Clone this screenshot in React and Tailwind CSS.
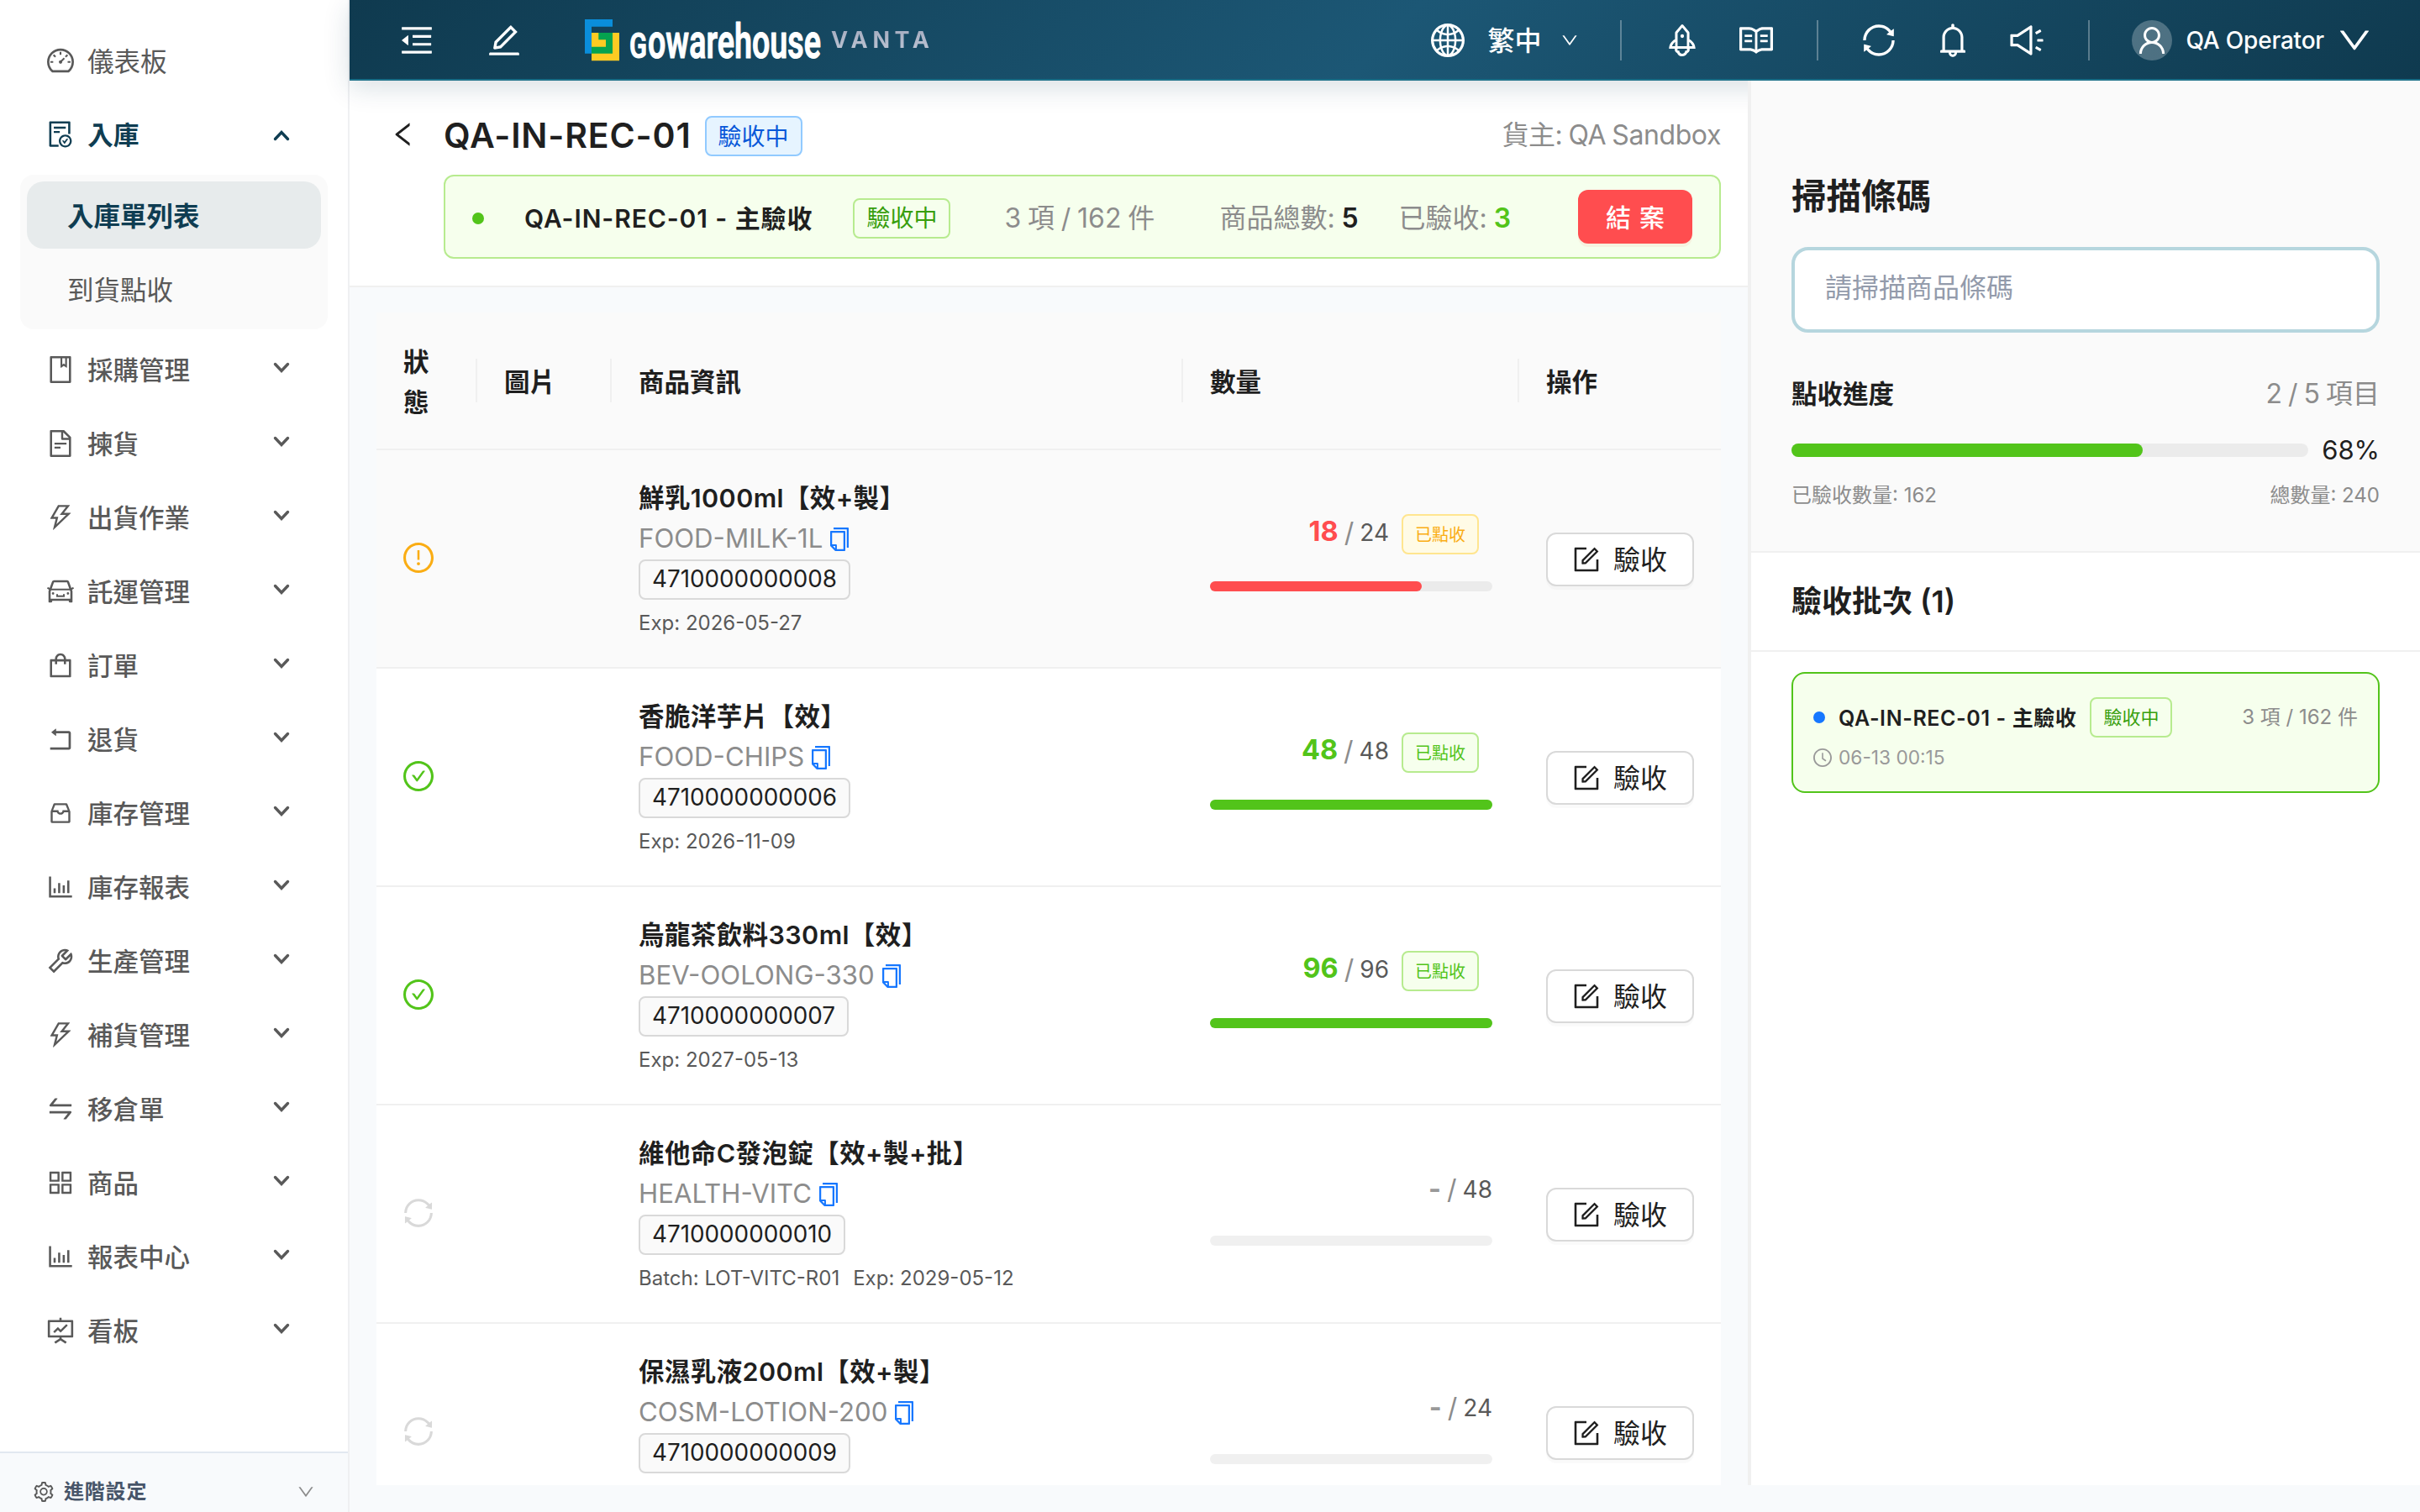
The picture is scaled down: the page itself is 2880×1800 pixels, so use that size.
import React from 'react';
import {
  AiOutlineDashboard,
  AiOutlineFileDone,
  AiOutlineBook,
  AiOutlineFileText,
  AiOutlineThunderbolt,
  AiOutlineCar,
  AiOutlineShopping,
  AiOutlineRollback,
  AiOutlineInbox,
  AiOutlineBarChart,
  AiOutlineTool,
  AiOutlineSwap,
  AiOutlineAppstore,
  AiOutlineFundProjectionScreen,
  AiOutlineSetting,
  AiOutlineDown,
  AiOutlineLeft,
  AiOutlineMenuFold,
  AiOutlineEdit,
  AiOutlineGlobal,
  AiOutlineRocket,
  AiOutlineRead,
  AiOutlineSync,
  AiOutlineBell,
  AiOutlineSound,
  AiOutlineUser,
  AiOutlineCopy,
  AiOutlineForm,
  AiOutlineExclamationCircle,
  AiOutlineCheckCircle,
  AiOutlineClockCircle,
} from 'react-icons/ai';

const menuItems = [
  { label: '採購管理', icon: AiOutlineBook },
  { label: '揀貨', icon: AiOutlineFileText },
  { label: '出貨作業', icon: AiOutlineThunderbolt },
  { label: '託運管理', icon: AiOutlineCar },
  { label: '訂單', icon: AiOutlineShopping },
  { label: '退貨', icon: AiOutlineRollback },
  { label: '庫存管理', icon: AiOutlineInbox, viewBox: '0 0 1024 1024' },
  { label: '庫存報表', icon: AiOutlineBarChart },
  { label: '生產管理', icon: AiOutlineTool },
  { label: '補貨管理', icon: AiOutlineThunderbolt },
  { label: '移倉單', icon: AiOutlineSwap },
  { label: '商品', icon: AiOutlineAppstore },
  { label: '報表中心', icon: AiOutlineBarChart },
  { label: '看板', icon: AiOutlineFundProjectionScreen },
];

const products = [
  { name: '鮮乳1000ml【效+製】', sku: 'FOOD-MILK-1L', barcode: '4710000000008', exp: '2026-05-27', received: 18, total: 24, status: 'partial' },
  { name: '香脆洋芋片【效】', sku: 'FOOD-CHIPS', barcode: '4710000000006', exp: '2026-11-09', received: 48, total: 48, status: 'done' },
  { name: '烏龍茶飲料330ml【效】', sku: 'BEV-OOLONG-330', barcode: '4710000000007', exp: '2027-05-13', received: 96, total: 96, status: 'done' },
  { name: '維他命C發泡錠【效+製+批】', sku: 'HEALTH-VITC', barcode: '4710000000010', batch: 'LOT-VITC-R01', exp: '2029-05-12', received: 0, total: 48, status: 'pending' },
  { name: '保濕乳液200ml【效+製】', sku: 'COSM-LOTION-200', barcode: '4710000000009', received: 0, total: 24, status: 'pending' },
];

// Ant icons are drawn on a 896 grid with a 64 offset
const Icon = ({ as: Glyph, size, viewBox = '64 64 896 896', className = '' }) => (
  <Glyph size={size} viewBox={viewBox} className={`shrink-0 ${className}`} />
);

const Chevron = ({ open }) => (
  <svg width="20" height="14" viewBox="0 0 20 14" fill="none" stroke="currentColor" strokeWidth="3.4" strokeLinecap="round" className="shrink-0">
    {open ? <path d="M2.5 11.5 10 3.5l7.5 8" /> : <path d="M2.5 2.5 10 10.5l7.5-8" />}
  </svg>
);

const Sidebar = () => (
  <aside className="w-[416px] shrink-0 flex flex-col bg-white border-r-2 border-[#eff0f2]">
    <nav className="flex-1 pt-8 text-[#595959]">
      <div className="h-20 pl-14 flex items-center gap-4 text-[31.5px]">
        <Icon as={AiOutlineDashboard} size={32} />
        <span className="pt-[3px]">儀表板</span>
      </div>
      <div className="mt-2 h-20 pl-14 pr-[69px] flex items-center gap-4 text-[30.8px] font-semibold text-[#0f3d52]">
        <Icon as={AiOutlineFileDone} size={32} />
        <span className="flex-1 pt-[3px]">入庫</span>
        <span className="pt-0.5 flex">
          <Chevron open />
        </span>
      </div>
      <div className="my-2 mx-6 p-2 rounded-2xl bg-[#fafafa] text-[31.5px]">
        <div className="h-20 pl-12 pt-[3px] flex items-center rounded-[20px] bg-[#e7ebec] font-semibold text-[#0f3d52]">入庫單列表</div>
        <div className="mt-2 h-20 pl-12 pt-[3px] flex items-center">到貨點收</div>
      </div>
      <div className="flex flex-col gap-2">
        {menuItems.map((item) => (
          <div key={item.label} className="h-20 pl-14 pr-[69px] flex items-center gap-4 text-[30.5px] font-medium">
            <Icon as={item.icon} size={32} viewBox={item.viewBox} />
            <span className="flex-1 pt-0.5">{item.label}</span>
            <span className="-mt-1 flex">
              <Chevron />
            </span>
          </div>
        ))}
      </div>
    </nav>
    <div className="h-[72px] pt-[22px] pl-10 pr-10 flex items-center gap-3 bg-[#f8fafc] border-t-2 border-[#e2e8f0]">
      <Icon as={AiOutlineSetting} size={24} className="text-[#595959]" />
      <span className="flex-1 text-2xl font-bold tracking-[0.8px] text-[#475569]">進階設定</span>
      <Icon as={AiOutlineDown} size={20} className="text-[#8c8c8c]" />
    </div>
  </aside>
);

const Divider = () => <span className="w-0.5 h-12 bg-white/30" />;

const Logo = () => (
  <svg width="284" height="56" viewBox="0 0 284 56" fill="#fff" className="shrink-0 font-[Roboto,sans-serif] font-semibold">
    <path d="M0 3h33v8.7H8v32H0z" fill="#0a8edb" />
    <path d="M8 19h33v33.3H8z" fill="#fdcb23" />
    <path d="M16.3 19H33v24.7H8v-8h17v-8.4h-8.7z" fill="#05a34f" />
    <g stroke="#fff" strokeWidth="1" strokeLinejoin="round">
      <text x="53" y="48.5" textLength="21" lengthAdjust="spacingAndGlyphs" className="text-[43px]">
        G
      </text>
      <text x="75" y="48.5" textLength="206" lengthAdjust="spacingAndGlyphs" className="text-[57px]">
        owarehouse
      </text>
    </g>
  </svg>
);

const Header = () => (
  <header className="relative z-10 h-24 pt-0.5 shrink-0 flex items-center border-b-2 border-[#1a6e87] bg-[linear-gradient(135deg,#0f3a4f_0%,#1c5775_50%,#0f3a4f_100%)] shadow-[0_8px_32px_rgba(13,59,79,0.16)] text-white">
    <div className="flex items-center pl-[60px]">
      <Icon as={AiOutlineMenuFold} size={40} />
      <Icon as={AiOutlineEdit} size={40} className="ml-16 mr-[76px]" />
      <Logo />
      <span className="ml-[9px] text-[27px] font-bold tracking-[5.6px] bg-gradient-to-b from-[#a0a6ba] to-[#c3ccda] bg-clip-text text-transparent">VANTA</span>
    </div>
    <div className="ml-auto flex items-center pr-[58px]">
      <Icon as={AiOutlineGlobal} size={40} />
      <span className="ml-7 pt-0.5 text-[32px] font-medium">繁中</span>
      <Icon as={AiOutlineDown} size={20} className="ml-[23px] mr-[50px]" />
      <Divider />
      <Icon as={AiOutlineRocket} size={40} className="ml-[52px] mr-12" />
      <Icon as={AiOutlineRead} size={40} className="mr-[52px]" />
      <Divider />
      <Icon as={AiOutlineSync} size={40} className="ml-[52px] mr-12" />
      <Icon as={AiOutlineBell} size={40} className="mr-12" />
      <Icon as={AiOutlineSound} size={40} className="mr-[53px]" />
      <Divider />
      <span className="ml-[50px] w-12 h-12 rounded-full bg-white/25 flex items-center justify-center">
        <Icon as={AiOutlineUser} size={36} />
      </span>
      <span className="ml-[17px] mr-4 text-[28px] font-medium tracking-[-0.2px]">QA Operator</span>
      <Icon as={AiOutlineDown} size={40} />
    </div>
  </header>
);

const OrderHeader = () => (
  <div className="h-[246px] shrink-0 bg-white border-b-2 border-[#f0f0f0] pl-12 pr-8 text-[#1f1f1f]">
    <div className="h-28 pt-5 flex items-center">
      <Icon as={AiOutlineLeft} size={32} className="mb-1" />
      <h1 className="ml-8 mb-0.5 text-[41px] font-semibold leading-none tracking-[0.85px]">QA-IN-REC-01</h1>
      <span className="ml-4 h-12 px-3.5 pt-0.5 flex items-center rounded-lg border-2 border-[#91caff] bg-[#e6f4ff] text-[28px] text-[#0958d9]">驗收中</span>
      <span className="ml-auto mb-0.5 text-[32px] tracking-[-0.4px] [word-spacing:-1.5px] text-[#8c8c8c]">貨主: QA Sandbox</span>
    </div>
    <div className="ml-16 h-[100px] pt-1 pl-8 pr-8 flex items-center rounded-xl border-2 border-[#b7eb8f] bg-[#f6ffed] text-[32px] text-[#8c8c8c] [word-spacing:-1.2px]">
      <span className="w-3.5 h-3.5 rounded-full bg-[#52c41a]" />
      <span className="ml-12 text-[30px] font-semibold tracking-[0.9px] [word-spacing:0px] text-[#1f1f1f]">QA-IN-REC-01 - 主驗收</span>
      <span className="ml-12 h-12 px-3.5 flex items-center rounded-lg border-2 border-[#b7eb8f] text-[28px] text-[#389e0d]">驗收中</span>
      <span className="ml-16">3 項 / 162 件</span>
      <span className="ml-auto">
        商品總數: <b className="font-semibold text-[#1f1f1f]">5</b>
      </span>
      <span className="ml-12">
        已驗收: <b className="font-semibold text-[#52c41a]">3</b>
      </span>
      <button className="ml-20 mb-1 w-[136px] h-16 pt-0.5 rounded-xl bg-[#ff4d4f] text-white text-[30px] font-medium [word-spacing:2px] shadow-[0_4px_0_rgba(255,38,5,0.06)]">結 案</button>
    </div>
  </div>
);

const StatusIcon = ({ status }) => {
  if (status === 'partial') return <Icon as={AiOutlineExclamationCircle} size={36} className="text-[#faad14]" />;
  if (status === 'done') return <Icon as={AiOutlineCheckCircle} size={36} className="text-[#52c41a]" />;
  return <Icon as={AiOutlineSync} size={36} className="text-[#d9d9d9]" />;
};

const quantityStyles = {
  partial: { text: 'text-[#ff4d4f]', bar: 'bg-[#ff4d4f]', tag: 'border-[#ffe58f] bg-[#fffbe6] text-[#faad14]' },
  done: { text: 'text-[#52c41a]', bar: 'bg-[#52c41a]', tag: 'border-[#b7eb8f] bg-[#f6ffed] text-[#52c41a]' },
};

const Quantity = ({ received, total, status }) => {
  const style = quantityStyles[status];
  return (
    <div className="px-8 pb-[15px]">
      <div className="h-12 flex items-center justify-end text-[28px] text-[#595959]">
        <span className={`flex items-center ${style ? 'mb-1' : 'mb-0.5'}`}>
          {style ? (
            <span className={`text-[32.5px] font-bold ${style.text}`}>{received}</span>
          ) : (
            <span className="text-[32px] font-bold text-[#999]">-</span>
          )}
          <span className="ml-[7px] mr-[7px] text-[32px] text-[#8c8c8c]">/</span>
          {total}
        </span>
        {style && <span className={`ml-[15px] mr-4 h-12 px-3.5 pt-0.5 flex items-center rounded-lg border-2 text-xl ${style.tag}`}>已點收</span>}
      </div>
      <div className={`${style ? 'mt-8' : 'mt-[30px]'} h-3 rounded-full bg-black/6`}>
        {style && <div className={`h-3 rounded-full ${style.bar}`} style={{ width: `${(received / total) * 100}%` }} />}
      </div>
    </div>
  );
};

const ProductTable = () => (
  <div className="flex-1 min-h-0 overflow-hidden mt-[30px] mx-8">
    <div className="grid grid-cols-[120px_160px_680px_400px_240px] items-center h-[164px] bg-[#fafafa] border-b-2 border-[#f0f0f0] text-[30.5px] font-semibold text-[#1f1f1f]">
      <div className="pl-8 pr-14 pt-1 border-r-2 border-[#f0f0f0] h-[52px] flex items-center leading-[48px]">狀態</div>
      <div className="pl-8 pt-[3px] h-[52px] flex items-center border-r-2 border-[#f0f0f0]">圖片</div>
      <div className="pl-8 pt-[3px] h-[52px] flex items-center border-r-2 border-[#f0f0f0]">商品資訊</div>
      <div className="pl-8 pt-[3px] h-[52px] flex items-center border-r-2 border-[#f0f0f0]">數量</div>
      <div className="pl-8 pt-[3px]">操作</div>
    </div>
    {products.map((product, index) => (
      <div
        key={product.sku}
        className={`grid grid-cols-[120px_160px_680px_400px_240px] items-center h-[260px] border-b-2 border-[#f0f0f0] ${index === 0 ? 'bg-[#fafafa]' : 'bg-white'}`}
      >
        <div className="pl-8 pb-0.5">
          <StatusIcon status={product.status} />
        </div>
        <div />
        <div className="pl-8 pt-[5px]">
          <div className="h-12 flex items-center text-[30.5px] font-semibold tracking-[0.4px] text-[#1f1f1f]">{product.name}</div>
          <div className="h-12 pt-px flex items-center gap-1.5 text-[31.2px] text-[#8c8c8c]">
            {product.sku}
            <Icon as={AiOutlineCopy} size={28} className="text-[#1677ff]" />
          </div>
          <div className="h-12 mt-px w-fit px-3.5 flex items-center rounded-lg border-2 border-[#d9d9d9] bg-[#fafafa] text-[27.8px] text-[#1f1f1f]">{product.barcode}</div>
          <div className="h-12 mt-1 flex items-center gap-4 text-2xl text-[#595959]">
            {product.batch && <span>Batch: {product.batch}</span>}
            {product.exp && <span>Exp: {product.exp}</span>}
          </div>
        </div>
        <Quantity {...product} />
        <div className="pl-8 pt-0.5">
          <button className="w-44 h-16 flex items-center justify-center gap-4 rounded-xl border-2 border-[#d9d9d9] bg-white text-[32px] text-[#1f1f1f] shadow-[0_4px_0_rgba(0,0,0,0.02)]">
            <Icon as={AiOutlineForm} size={32} />
            <span className="pt-0.5">驗收</span>
          </button>
        </div>
      </div>
    ))}
  </div>
);

const ScanPanel = () => (
  <aside className="relative z-20 w-[800px] shrink-0 mb-8 bg-white border-l-4 border-[#f0f0f0] text-[#1f1f1f]">
    <div className="h-[562px] px-12 pt-[104px] bg-[#fafafa] border-b-2 border-[#f0f0f0]">
      <h2 className="h-[66px] pt-0.5 flex items-center text-[41.5px] font-semibold">掃描條碼</h2>
      <div className="mt-7 h-[102px] px-9 pb-1 flex items-center rounded-[20px] border-4 border-[#b6d6de] bg-white text-[32px] text-[#939bab]">請掃描商品條碼</div>
      <div className="mt-12 h-12 pt-0.5 flex items-center justify-between">
        <span className="text-[30.5px] font-semibold">點收進度</span>
        <span className="text-[32px] [word-spacing:-2px] text-[#8c8c8c]">2 / 5 項目</span>
      </div>
      <div className="mt-5 h-12 flex items-center gap-4 text-[31px]">
        <div className="flex-1 h-4 rounded-full bg-black/6">
          <div className="h-4 rounded-full bg-[#52c41a]" style={{ width: '68%' }} />
        </div>
        <span>68%</span>
      </div>
      <div className="mt-2.5 h-10 flex items-center justify-between text-2xl text-[#8c8c8c]">
        <span>已驗收數量: 162</span>
        <span>總數量: 240</span>
      </div>
    </div>
    <h2 className="h-[118px] px-12 flex items-center border-b-2 border-[#f0f0f0] text-4xl font-semibold">驗收批次 (1)</h2>
    <div className="mt-6 mx-12 h-36 px-6 pt-7 rounded-2xl border-2 border-[#52c41a] bg-[#f6ffed]">
      <div className="h-12 flex items-center">
        <span className="w-3.5 h-3.5 rounded-full bg-[#1677ff]" />
        <span className="ml-4 pt-[3px] text-[25px] font-semibold tracking-[0.6px]">QA-IN-REC-01 - 主驗收</span>
        <span className="ml-4 h-12 px-3.5 flex items-center rounded-lg border-2 border-[#b7eb8f] text-[22px] text-[#389e0d]">驗收中</span>
        <span className="ml-auto text-2xl text-[#8c8c8c]">3 項 / 162 件</span>
      </div>
      <div className="mt-0.5 h-11 flex items-center gap-2 text-[22.7px] text-[#999]">
        <Icon as={AiOutlineClockCircle} size={22} />
        06-13 00:15
      </div>
    </div>
  </aside>
);

const App = () => (
  <div className="w-[2880px] h-[1800px] flex overflow-hidden bg-[#f8fafc] font-[Inter,'Noto_Sans_CJK_TC',sans-serif]">
    <Sidebar />
    <div className="flex-1 min-w-0 flex flex-col">
      <Header />
      <div className="flex-1 min-h-0 flex">
        <main className="flex-1 min-w-0 flex flex-col pb-8">
          <OrderHeader />
          <ProductTable />
        </main>
        <ScanPanel />
      </div>
    </div>
  </div>
);

export default App;
